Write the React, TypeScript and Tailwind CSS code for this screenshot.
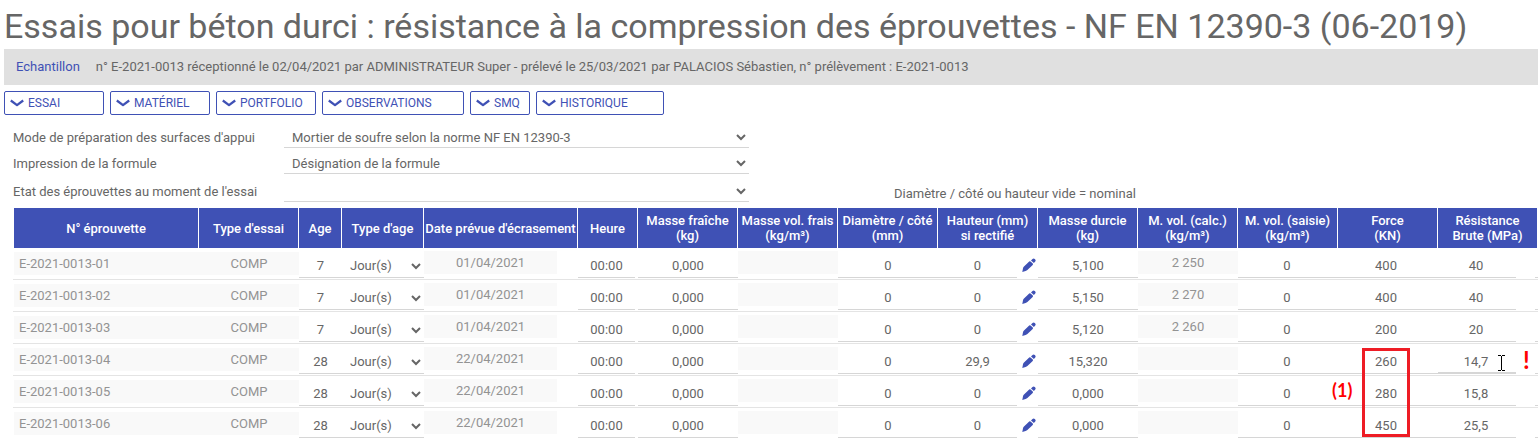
import { Fragment, useState } from 'react';

type Specimen = {
  id: string;
  age: string;
  date: string;
  height: string;
  mass: string;
  density: string;
  force: string;
  strength: string;
};

const SPECIMENS: Specimen[] = [
  { id: 'E-2021-0013-01', age: '7', date: '01/04/2021', height: '0', mass: '5,100', density: '2 250', force: '400', strength: '40' },
  { id: 'E-2021-0013-02', age: '7', date: '01/04/2021', height: '0', mass: '5,150', density: '2 270', force: '400', strength: '40' },
  { id: 'E-2021-0013-03', age: '7', date: '01/04/2021', height: '0', mass: '5,120', density: '2 260', force: '200', strength: '20' },
  { id: 'E-2021-0013-04', age: '28', date: '22/04/2021', height: '29,9', mass: '15,320', density: '', force: '260', strength: '14,7' },
  { id: 'E-2021-0013-05', age: '28', date: '22/04/2021', height: '0', mass: '0,000', density: '', force: '280', strength: '15,8' },
  { id: 'E-2021-0013-06', age: '28', date: '22/04/2021', height: '0', mass: '0,000', density: '', force: '450', strength: '25,5' },
];

const COLUMNS = [
  { lines: ['N° éprouvette'], width: 'w-[186px]' },
  { lines: ["Type d'essai"], width: 'w-[100px]' },
  { lines: ['Age'], width: 'w-[43px]' },
  { lines: ["Type d'age"], width: 'w-[82px]' },
  { lines: ["Date prévue d'écrasement"], width: 'w-[154px]' },
  { lines: ['Heure'], width: 'w-[60px]' },
  { lines: ['Masse fraîche', '(kg)'], width: 'w-[100px]' },
  { lines: ['Masse vol. frais', '(kg/m³)'], width: 'w-[100px]' },
  { lines: ['Diamètre / côté', '(mm)'], width: 'w-[100px]' },
  { lines: ['Hauteur (mm)', 'si rectifié'], width: 'w-[100px]' },
  { lines: ['Masse durcie', '(kg)'], width: 'w-[100px]' },
  { lines: ['M. vol. (calc.)', '(kg/m³)'], width: 'w-[100px]' },
  { lines: ['M. vol. (saisie)', '(kg/m³)'], width: 'w-[100px]' },
  { lines: ['Force', '(KN)'], width: 'w-[100px]' },
  { lines: ['Résistance', 'Brute (MPa)'], width: 'w-[100px]' },
];

const SECTIONS = [
  { label: 'ESSAI', width: 'w-[100px]' },
  { label: 'MATÉRIEL', width: 'w-[100px]' },
  { label: 'PORTFOLIO', width: 'w-[100px]' },
  { label: 'OBSERVATIONS', width: 'w-[142px]' },
  { label: 'SMQ', width: 'w-[60px]' },
  { label: 'HISTORIQUE', width: 'w-[128px]' },
];

const SETTINGS = [
  { id: 'surface', label: "Mode de préparation des surfaces d'appui", value: 'Mortier de soufre selon la norme NF EN 12390-3', gap: '' },
  { id: 'formule', label: 'Impression de la formule', value: 'Désignation de la formule', gap: 'mt-[5px]' },
  { id: 'etat', label: "Etat des éprouvettes au moment de l'essai", value: '', gap: 'mt-[7px]' },
];

function Chevron() {
  return (
    <svg viewBox="0 0 14 8" className="h-2 w-3.5 shrink-0" fill="none" stroke="currentColor" strokeWidth="2.2">
      <path d="M0.8 1.5 L7 6.2 L13.2 1.5" strokeLinejoin="round" />
    </svg>
  );
}

function Pencil() {
  return (
    <svg viewBox="0 0 14 14" className="h-3.5 w-3.5" fill="currentColor">
      <path d="M0.3 13.9 L1 10.2 Q1.2 9.2 2 8.4 L7.2 3.4 Q7.9 2.9 8.5 3.5 L10.8 5.6 Q11.3 6.2 10.7 6.9 L5.4 12 Q4.6 12.7 3.6 12.9 Z" />
      <path d="M9 2.4 L10.5 1 Q11.6 0 12.8 1.1 Q14.2 2.4 13.2 3.6 L11.9 5.1 Z" />
    </svg>
  );
}

function Caret() {
  return (
    <svg viewBox="0 0 7 16" className="h-4 w-[7px]" fill="none" stroke="#000" shapeRendering="crispEdges">
      <path d="M0 0.5 H3 M4 0.5 H7 M3.5 1 V15 M0 15.5 H3 M4 15.5 H7" />
    </svg>
  );
}

function Field({ label, value, look = 'w-full border-b pb-0.5' }: { label: string; value: string; look?: string }) {
  return (
    <input
      aria-label={label}
      defaultValue={value}
      className={`mt-[7px] block h-[23px] border-[#d6d6d6] bg-transparent text-center outline-none focus:border-[#3f51b5] ${look}`}
    />
  );
}

function Locked({ label, value, width = 'w-full' }: { label: string; value: string; width?: string }) {
  return (
    <input
      aria-label={label}
      value={value}
      readOnly
      className={`mt-[3px] block h-[23px] bg-[#f9f9f9] text-center text-[#939393] outline-none ${width}`}
    />
  );
}

function SpecimenRow({ item }: { item: Specimen }) {
  const marked = item.id.endsWith('-04');
  const noted = item.id.endsWith('-05');

  return (
    <tr className="h-8 align-top [&>td]:border-b [&>td]:border-[#e4e4e4]">
      <td className="pl-px">
        <input
          aria-label="N° éprouvette"
          value={item.id}
          readOnly
          className="mt-1 block h-[23px] w-full bg-[#f9f9f9] pl-[5px] text-[#939393] outline-none"
        />
      </td>
      <td>
        <input
          aria-label="Type d'essai"
          value="COMP"
          readOnly
          className="mt-1 block h-[23px] w-full bg-[#f9f9f9] text-center text-[#939393] outline-none"
        />
      </td>
      <td><Field label="Age" value={item.age} /></td>
      <td>
        <select
          aria-label="Type d'age"
          className="mt-[7px] block h-[23px] w-full border-b border-[#d6d6d6] bg-transparent px-1 pb-0.5 outline-none"
        >
          <option>Jour(s)</option>
        </select>
      </td>
      <td><Locked label="Date prévue" value={item.date} width="w-[133px]" /></td>
      <td><Field label="Heure" value="00:00" look="w-[57px] border-b pb-0.5" /></td>
      <td><Field label="Masse fraîche" value="0,000" /></td>
      <td><Locked label="Masse vol. frais" value="" /></td>
      <td><Field label="Diamètre / côté" value="0" /></td>
      <td>
        <div className="flex">
          <Field label="Hauteur" value={item.height} look="w-[79px] border-b pb-0.5" />
          <button type="button" aria-label="Modifier la hauteur" className="mt-2.5 ml-[5px] h-3.5 w-3.5 text-[#3f51b5]">
            <Pencil />
          </button>
        </div>
      </td>
      <td><Field label="Masse durcie" value={item.mass} /></td>
      <td><Locked label="M. vol. calculée" value={item.density} /></td>
      <td><Field label="M. vol. saisie" value="0" look="w-full border-b pr-0.5 pb-0.5" /></td>
      <td className="relative">
        <Field label="Force" value={item.force} look="w-full border-b pr-1 pb-0.5" />
        {marked && (
          <div className="pointer-events-none absolute top-1 left-6 z-10 h-[89px] w-12 border-3 border-[#ee1c25]" />
        )}
        {noted && (
          <span className="absolute top-1 -left-1.5 font-['Lato',sans-serif] text-lg leading-5 font-bold text-[#ff0000]">
            (1)
          </span>
        )}
      </td>
      <td className="relative">
        <div className="flex justify-between">
          <Field
            label="Résistance brute"
            value={item.strength}
            look={marked ? 'w-[78px] border-b-2 pr-0.5 pb-px' : 'w-[78px] border-b pr-0.5 pb-0.5'}
          />
          <span className="mt-[7px] h-[23px] w-[3px] border-b border-[#d6d6d6]" />
        </div>
        {marked && (
          <>
            <span className="absolute top-[11px] left-[60px]"><Caret /></span>
            <span className="absolute top-1 left-[85px] font-['Lato',sans-serif] text-2xl leading-6 font-bold text-[#ff0000]">
              !
            </span>
          </>
        )}
      </td>
    </tr>
  );
}

export default function App() {
  const [open, setOpen] = useState<string | null>(null);

  return (
    <main className="overflow-hidden bg-white pl-1 font-['Roboto',sans-serif] text-[13px] text-[#666666]">
      <h1 className="h-[49px] text-[34px] leading-[53px] whitespace-nowrap">
        Essais pour béton durci : résistance à la compression des éprouvettes - NF EN 12390-3 (06-2019)
      </h1>

      <div className="flex h-9 items-center gap-4 bg-[#e0e0e0] px-3">
        <a href="#echantillon" className="text-[#3f51b5]">Echantillon</a>
        <p>
          n° E-2021-0013 réceptionné le 02/04/2021 par ADMINISTRATEUR Super - prélevé le 25/03/2021 par PALACIOS
          Sébastien, n° prélèvement : E-2021-0013
        </p>
      </div>

      <nav className="mt-1.5 flex gap-1.5">
        {SECTIONS.map((s) => (
          <button
            key={s.label}
            type="button"
            aria-expanded={open === s.label}
            onClick={() => setOpen(open === s.label ? null : s.label)}
            className={`flex h-6 items-center gap-1 rounded-xs border border-[#3f51b5] pl-[5px] text-xs text-[#3f51b5] ${s.width}`}
          >
            <Chevron />
            {s.label}
          </button>
        ))}
      </nav>

      <form className="pt-3 pb-1.5 pl-[9px]">
        {SETTINGS.map((s) => (
          <div key={s.id} className={`flex h-[21px] items-center ${s.gap}`}>
            <label htmlFor={s.id} className="w-[271px] shrink-0">{s.label}</label>
            <select
              id={s.id}
              className="h-[21px] w-full max-w-[465px] border-b border-[#d6d6d6] bg-transparent px-1 outline-none"
            >
              <option>{s.value}</option>
            </select>
            {s.id === 'etat' && (
              <span className="mt-1 ml-[145px] whitespace-nowrap">Diamètre / côté ou hauteur vide = nominal</span>
            )}
          </div>
        ))}
      </form>

      <div className="pl-[9px]">
        <table className="w-full table-fixed border-separate border-spacing-0">
          <thead>
            <tr className="h-10">
              {COLUMNS.map((c) => (
                <th
                  key={c.lines[0]}
                  className={`border-r border-white bg-[#3f51b5] p-0 leading-[15px] font-medium whitespace-nowrap text-white first:border-l ${c.width}`}
                >
                  {c.lines.map((line, i) => (
                    <Fragment key={line}>
                      {i > 0 && <br />}
                      {line}
                    </Fragment>
                  ))}
                </th>
              ))}
            </tr>
          </thead>
          <tbody>
            {SPECIMENS.map((item) => (
              <SpecimenRow key={item.id} item={item} />
            ))}
          </tbody>
        </table>
      </div>
    </main>
  );
}
